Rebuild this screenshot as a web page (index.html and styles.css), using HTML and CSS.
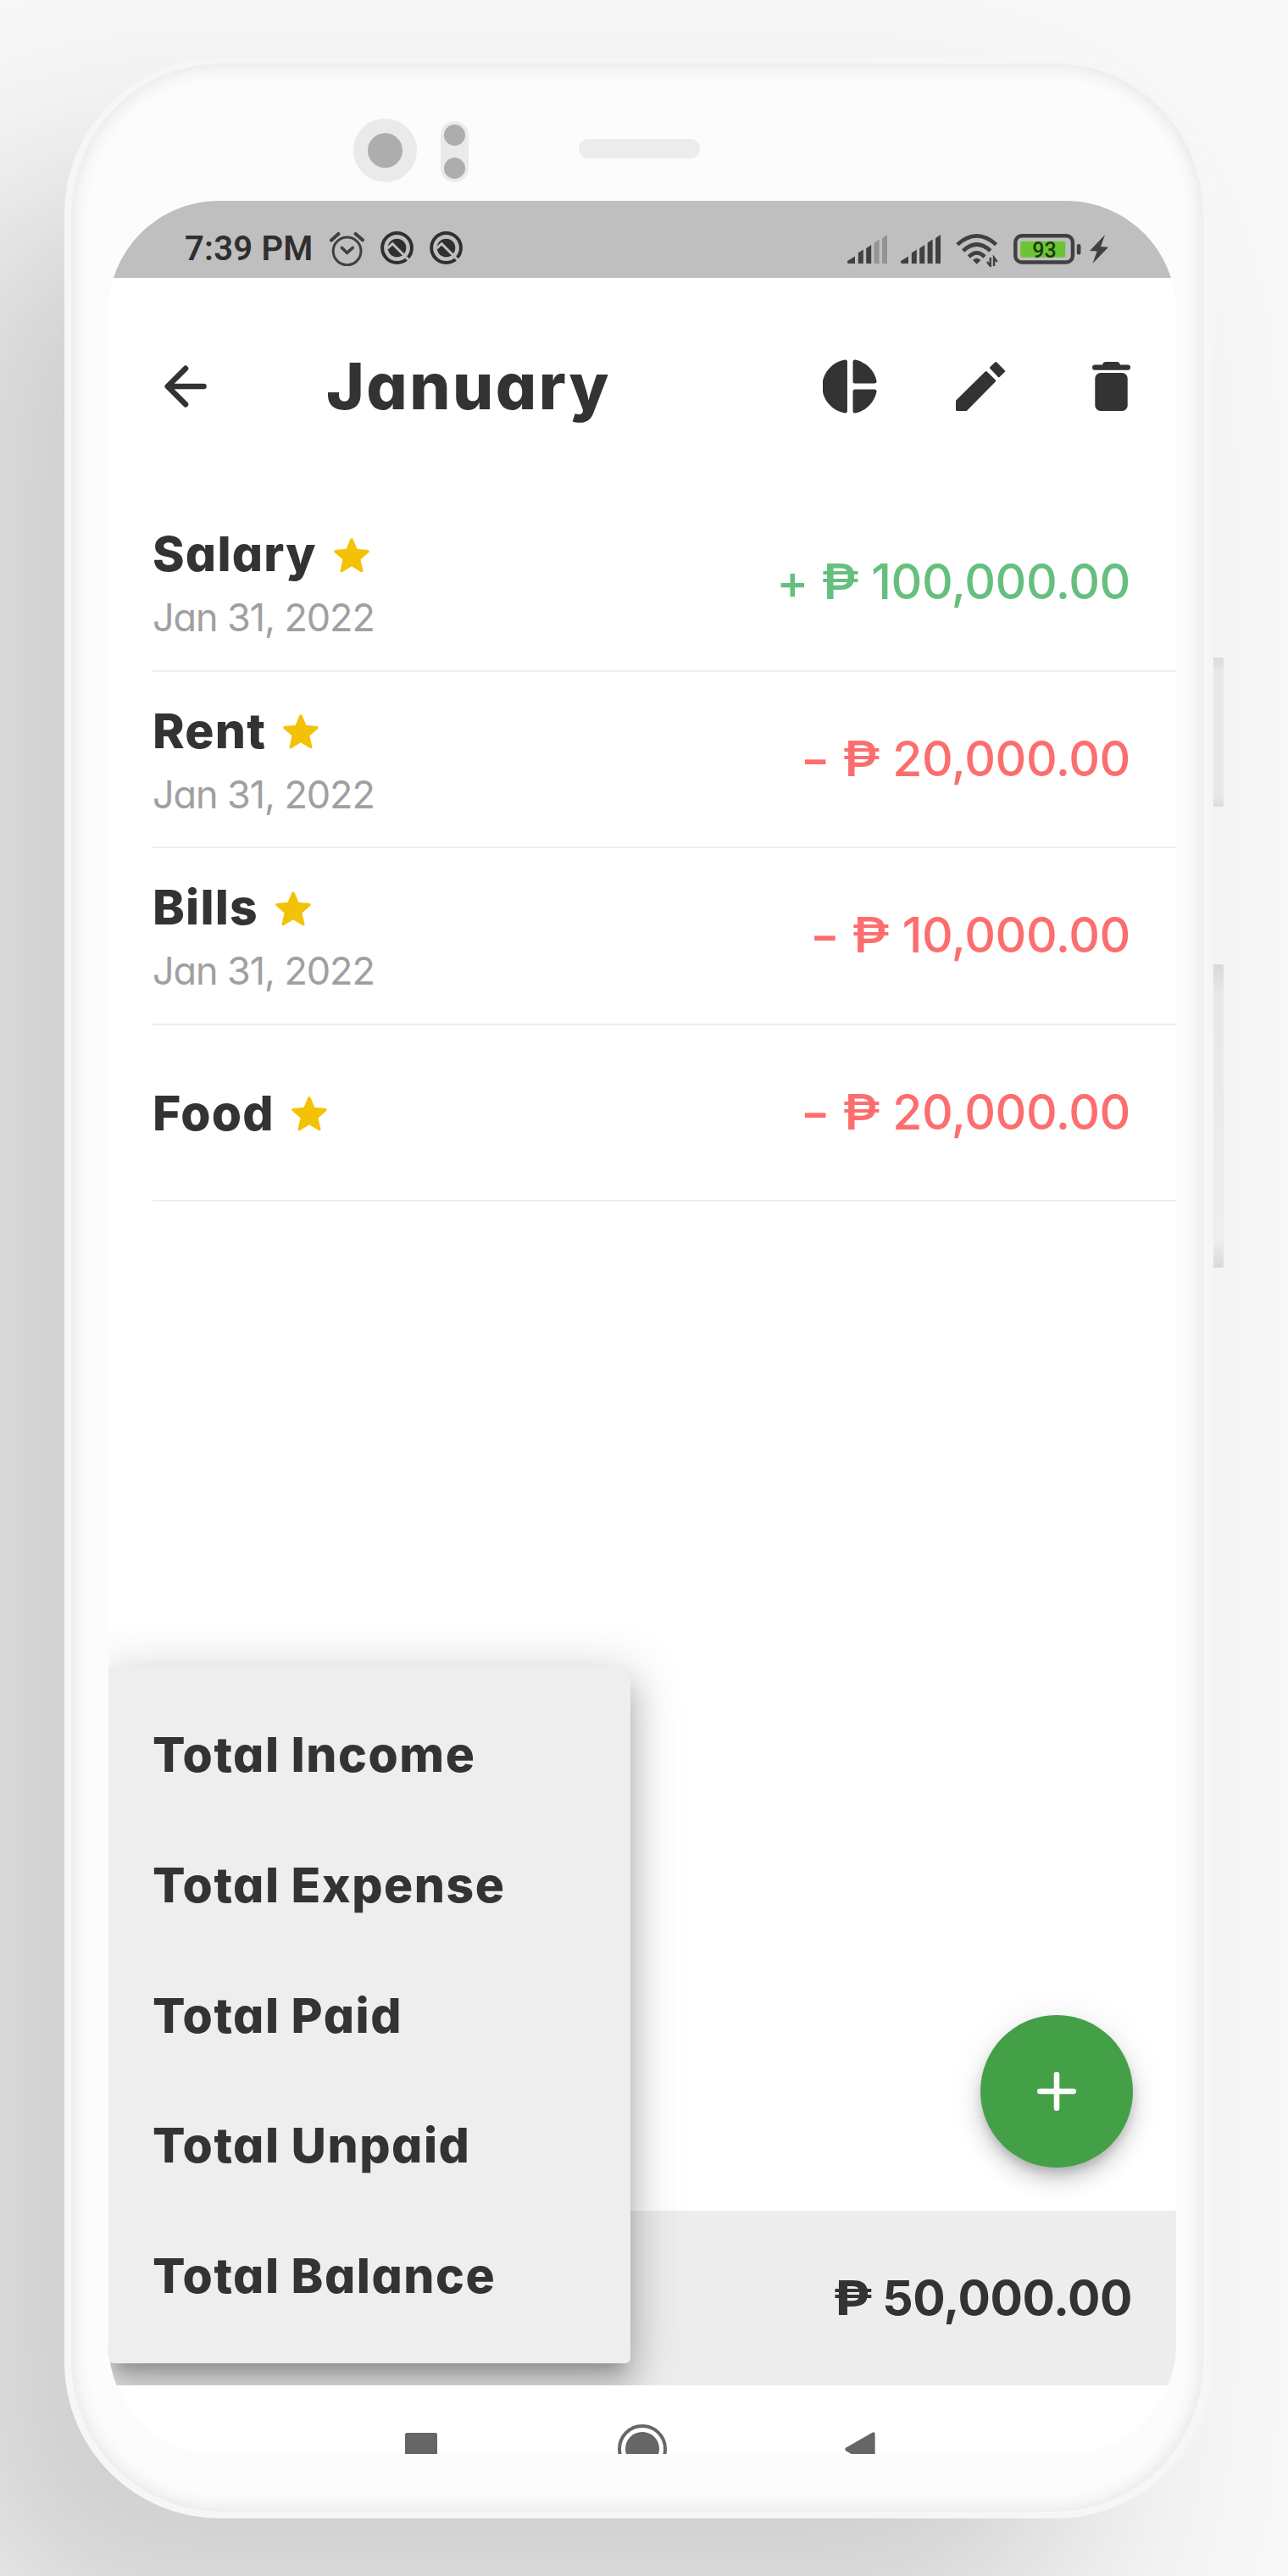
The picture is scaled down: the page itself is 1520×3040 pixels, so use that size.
FILE: index.html
```html
<!DOCTYPE html>
<html lang="en">
<head>
<meta charset="utf-8">
<title>January budget</title>
<link rel="stylesheet" href="styles.css">
</head>
<body>
<svg class="defs" aria-hidden="true">
  <symbol id="star" viewBox="0 0 42 41">
    <path d="M21 2 L26.2 14.4 L40 15.8 L29.6 24.8 L32.8 38.6 L21 31.4 L9.2 38.6 L12.4 24.8 L2 15.8 L15.8 14.4 Z" fill="#f3c206" stroke="#f3c206" stroke-width="3.4" stroke-linejoin="round"/>
  </symbol>
  <symbol id="quick" viewBox="0 0 39 39">
    <circle cx="19.5" cy="19.5" r="17.4" fill="none" stroke="#2f2f2f" stroke-width="4"/>
    <circle cx="19.5" cy="19.5" r="10.8" fill="#2f2f2f"/>
    <path d="M8.5 20 L14.2 14.6 L35 35.5" fill="none" stroke="#bfbfbf" stroke-width="3"/>
  </symbol>
</svg>
<main class="phone">
  <span class="side-button power"></span>
  <span class="side-button volume"></span>
  <div class="bezel">
    <span class="camera"></span>
    <span class="sensors"><i></i><i></i></span>
    <span class="speaker"></span>
  </div>
  <div class="screen">
    <div class="status">
      <span class="clock">7:39 PM</span>
      <svg class="alarm" width="41" height="40" viewBox="0 0 41 40" fill="none" stroke="#404040" stroke-linecap="round">
        <circle cx="20.6" cy="22.3" r="16.4" stroke-width="3"/>
        <path d="M14.4 18.4 L20.6 24.3 L27.2 18.4" stroke-width="3.6"/>
        <path d="M2 9.6 L10.4 2 M30.6 2 L39 9.2" stroke-width="4"/>
      </svg>
      <svg class="quick" width="39" height="39"><use href="#quick"/></svg>
      <svg class="quick" width="39" height="39"><use href="#quick"/></svg>
      <span class="fill"></span>
      <svg class="signal" width="47" height="34" viewBox="0 0 47 34" fill="#404040">
        <path d="M0 31 L9 25.5 V34 H1.5 Q0 34 0 32.5Z M12.8 21.5 L18.8 17.5 V34 H12.8Z M22.2 16 L28.2 12 V34 H22.2Z"/>
        <path d="M31.6 9.5 L37.6 5.5 V34 H31.6Z M41 4 L47 0 V34 H41Z" fill="#949494"/>
      </svg>
      <svg class="signal second" width="47" height="34" viewBox="0 0 47 34" fill="#404040">
        <path d="M0 31 L9 25.5 V34 H1.5 Q0 34 0 32.5Z M12.8 21.5 L18.8 17.5 V34 H12.8Z M22.2 16 L28.2 12 V34 H22.2Z M31.6 9.5 L37.6 5.5 V34 H31.6Z M41 4 L47 0 V34 H41Z"/>
      </svg>
      <svg class="wifi" width="50" height="39" viewBox="0 0 50 39" fill="none" stroke="#404040" stroke-width="4.6">
        <path d="M1.8 12.6 Q24.7 -7.8 47.6 12.6 M8.6 20 Q24.7 5 40.8 20 M15.4 27.2 Q24.7 17.6 34 27.2"/>
        <path d="M20 31 Q24.7 26.5 29.4 31 L24.7 35.8Z" fill="#404040" stroke="none"/>
        <path d="M40.8 28 V38 L37 33 M45 38 V28 L48.6 33" stroke-width="2.4"/>
      </svg>
      <svg class="battery" width="80" height="36" viewBox="0 0 80 36">
        <rect x="2.3" y="2.3" width="67.6" height="31.2" rx="7.5" fill="none" stroke="#404040" stroke-width="4.4"/>
        <rect x="8.3" y="8.7" width="53" height="19" rx="2" fill="#6cc435"/>
        <rect x="74.8" y="12" width="4.6" height="12.4" rx="2" fill="#404040"/>
        <text x="36.4" y="27.6" class="charge">93</text>
      </svg>
      <svg class="bolt" width="22" height="34" viewBox="0 0 22 34"><path d="M18 0 L0 19 L8.6 19.6 L3.4 34 L22 14.8 L13 14Z" fill="#404040"/></svg>
    </div>

    <header class="header">
      <svg width="50" height="50" viewBox="0 0 50 50" fill="none" stroke="#333" stroke-width="6.6" stroke-linecap="round" stroke-linejoin="round"><path d="M46.5 25 H4 M25 3.8 L3.8 25 L25 46.2"/></svg>
      <h1>January</h1>
      <span class="fill"></span>
      <svg class="pie" width="64" height="64" viewBox="0 0 64 64" fill="#333" stroke="#333" stroke-width="5" stroke-linejoin="round">
        <path d="M26.4 3 A29.4 29.4 0 0 0 26.4 61Z M38 3 A29.8 29.8 0 0 1 61 25.9 H38Z M38 61 A29.8 29.8 0 0 0 61 38 H38Z"/>
      </svg>
      <svg class="pencil" width="58" height="58" viewBox="0 0 58 58" fill="#333" stroke="#333" stroke-width="3" stroke-linejoin="round">
        <path d="M1.5 46.4 L35.7 12.6 L45.6 22.4 L12.2 56.5 H1.5Z M41.5 7 L47.2 1.6 L56.6 11 L50.8 16.6Z"/>
      </svg>
      <svg width="45" height="58" viewBox="0 0 45 58" fill="#333">
        <path d="M12 3.4 Q13 0 16 0 H29 Q32 0 33 3.4 H41.8 A3.2 3.2 0 0 1 41.8 9.8 H3.2 A3.2 3.2 0 0 1 3.2 3.4Z"/>
        <rect x="3.3" y="13" width="38.4" height="45" rx="6.5"/>
      </svg>
    </header>

    <section class="list">
      <article class="entry">
        <div><h2>Salary <svg width="42" height="41"><use href="#star"/></svg></h2><p>Jan 31, 2022</p></div>
        <div class="amount income"><span>+</span><span class="peso">₱</span><span>100,000.00</span></div>
      </article>
      <article class="entry">
        <div><h2>Rent <svg width="42" height="41"><use href="#star"/></svg></h2><p>Jan 31, 2022</p></div>
        <div class="amount expense"><span class="minus">−</span><span class="peso">₱</span><span>20,000.00</span></div>
      </article>
      <article class="entry">
        <div><h2>Bills <svg width="42" height="41"><use href="#star"/></svg></h2><p>Jan 31, 2022</p></div>
        <div class="amount expense"><span class="minus">−</span><span class="peso">₱</span><span>10,000.00</span></div>
      </article>
      <article class="entry">
        <div><h2>Food <svg width="42" height="41"><use href="#star"/></svg></h2></div>
        <div class="amount expense"><span class="minus">−</span><span class="peso">₱</span><span>20,000.00</span></div>
      </article>
    </section>

    <div class="footer">
      <div class="amount total"><span class="peso">₱</span><span>50,000.00</span></div>
    </div>
    <button class="fab" aria-label="Add"><svg width="46" height="46" viewBox="0 0 46 46" stroke="#fff" stroke-width="6.6" stroke-linecap="round"><path d="M23 3.3 V42.7 M3.3 23 H42.7"/></svg></button>
    <ul class="menu">
      <li>Total Income</li>
      <li>Total Expense</li>
      <li>Total Paid</li>
      <li>Total Unpaid</li>
      <li>Total Balance</li>
    </ul>
    <nav class="navbar">
      <svg width="38" height="38"><rect width="38" height="38" rx="2" fill="#666"/></svg>
      <svg width="58" height="58"><circle cx="29" cy="29" r="27" fill="none" stroke="#666" stroke-width="4"/><circle cx="29" cy="29" r="20" fill="#666"/></svg>
      <svg width="37" height="43" viewBox="0 0 37 43"><path d="M33 2 L2.5 19.5 Q0 21.5 2.5 23.5 L33 41 Q36.6 42.5 36.6 39 V4 Q36.6 0 33 2Z" fill="#666"/></svg>
    </nav>
  </div>
</main>
</body>
</html>
```
FILE: styles.css
```css
* { box-sizing: border-box; }

body {
  margin: 0;
  width: 1520px;
  height: 3040px;
  padding: 69px 0 0 76px;
  overflow: hidden;
  background: #f8f8f8;
  color: #333;
  font-family: Inter, sans-serif;
  font-feature-settings: "cv11";
}

h1, h2, p, ul { margin: 0; padding: 0; }
svg { display: block; flex: none; }
.defs { position: absolute; width: 0; height: 0; }
.fill { flex: 1; }

.phone {
  position: relative;
  width: 1354px;
  height: 2903px;
  border: solid #f6f6f6;
  border-width: 6px 10px 8px 8px;
  border-radius: 184px;
  background: #fcfcfc;
  box-shadow: -156px 150px 250px #cecece, 0 0 2px #fff, inset 0 0 24px rgba(0, 0, 0, .12);
}

.side-button {
  position: absolute;
  left: 1348px;
  width: 12px;
  border-radius: 0 3px 3px 0;
}
.power { top: 701px; height: 176px; background: linear-gradient(#dadada, #e8e8e8 10%, #e8e8e8 92%, #dcdcdc); }
.volume { top: 1063px; height: 358px; background: linear-gradient(#d9d9d9, #e8e8e8 10%, #eee 91%, #d9d9d9); }

.bezel {
  display: flex;
  align-items: flex-start;
  height: 162px;
  padding: 65px 0 0 333px;
}
.camera { width: 75px; height: 75px; border-radius: 50%; background: #adadad; border: 17px solid #eaeaea; }
.sensors {
  display: flex;
  flex-direction: column;
  justify-content: space-between;
  width: 33px;
  height: 72px;
  margin: 3px 0 0 28px;
  padding: 4px;
  border-radius: 17px;
  background: #eaeaea;
}
.sensors i { height: 25px; border-radius: 50%; background: #adadad; }
.speaker { width: 143px; height: 23px; margin: 24px 0 0 130px; border-radius: 12px; background: #ececec; }

.screen {
  position: relative;
  display: flex;
  flex-direction: column;
  width: 1260px;
  height: 2659px;
  margin-left: 44px;
  overflow: hidden;
  border-radius: 130px;
  background: #fff;
}

.status {
  display: flex;
  align-items: center;
  height: 91px;
  padding: 23px 80px 0 90px;
  background: #bfbfbf;
}
.clock { width: 150px; font: 600 40px/40px Roboto, sans-serif; letter-spacing: .2px; color: #2f2f2f; white-space: nowrap; }
.alarm { margin-left: 21px; }
.quick { margin: 0 0 3px 19px; }
.second { margin-left: 16px; }
.wifi { margin: 3px 0 0 18px; }
.battery { margin-left: 18px; }
.bolt { margin-left: 10px; }
.charge { font: 500 25px Roboto, sans-serif; text-anchor: middle; fill: #1d3a0a; }

.header {
  display: flex;
  align-items: center;
  height: 256px;
  padding: 0 54px 0 66px;
}
.header h1 { margin: 0 0 2px 141px; font-size: 76px; font-weight: 800; line-height: 90px; letter-spacing: 2.5px; }
.pie { margin-right: 93px; }
.pencil { margin-right: 103px; }

.list { flex: 1; padding-left: 52px; }
.entry {
  display: flex;
  align-items: center;
  justify-content: space-between;
  height: 208.6px;
  padding-right: 54px;
  border-bottom: 2px solid #ededed;
}
.entry h2 {
  display: flex;
  align-items: center;
  gap: 20px;
  font-size: 57px;
  font-weight: 800;
  line-height: 83px;
  letter-spacing: 1.2px;
}
.entry h2 svg { margin-top: 3px; }
.entry p { font-size: 45px; line-height: 67px; letter-spacing: -1.1px; color: #a0a0a0; }

.amount {
  display: flex;
  align-items: center;
  gap: 18px;
  font-size: 57px;
  font-weight: 500;
  line-height: 70px;
  letter-spacing: -.4px;
}
.peso { transform: scaleX(1.16); }
.minus { font-size: 51px; font-weight: 600; }
.income { color: #66bf7d; }
.expense { color: #fc6e6e; }
.total { gap: 15px; font-weight: 700; }

.footer {
  display: flex;
  align-items: center;
  justify-content: flex-end;
  height: 206px;
  padding-right: 52px;
  background: #ededed;
}

.fab {
  position: absolute;
  top: 2141px;
  left: 1029px;
  display: flex;
  align-items: center;
  justify-content: center;
  width: 180px;
  height: 180px;
  padding: 0;
  border: 0;
  border-radius: 50%;
  background: #43a047;
  box-shadow: 0 8px 13px -3px rgba(0, 0, 0, .2), 0 16px 26px rgba(0, 0, 0, .14), 0 3px 46px rgba(0, 0, 0, .08);
}

.menu {
  position: absolute;
  top: 1730px;
  left: 0;
  width: 616px;
  height: 822px;
  padding: 27px 0 0 52px;
  border-radius: 6px;
  background: #eee;
  box-shadow: 0 16px 16px -10px rgba(0, 0, 0, .2), 0 26px 34px 4px rgba(0, 0, 0, .16), 0 10px 60px 8px rgba(0, 0, 0, .16);
  list-style: none;
}
.menu li { font-size: 57px; font-weight: 800; line-height: 153.8px; letter-spacing: 1.5px; word-spacing: -1px; }

.navbar {
  position: relative;
  display: flex;
  align-items: flex-start;
  height: 81px;
  padding: 46px 0 0 350px;
  overflow: hidden;
  background: #fff;
}
.navbar svg { margin: 10px 213px 0 0; }
.navbar svg + svg { margin: 0 209px 0 0; }
.navbar svg + svg + svg { margin: 8px 0 0; }
```
